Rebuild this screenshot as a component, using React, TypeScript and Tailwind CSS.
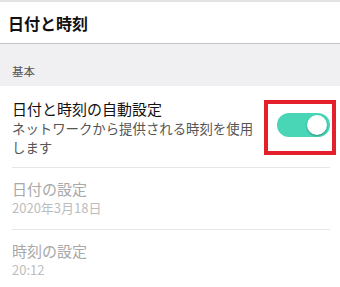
import React from "react";

function Toggle({ on }: { on: boolean }) {
  return (
    <div
      className={`relative h-[24px] w-[53px] rounded-full ${
        on ? "bg-[#48d6b6]" : "bg-[#cccccc]"
      }`}
    >
      <div
        className={`absolute top-[2px] h-[20px] w-[20px] rounded-full bg-white shadow-[0_1px_2px_rgba(0,0,0,0.35)] ${
          on ? "right-[3px]" : "left-[3px]"
        }`}
      />
    </div>
  );
}

export default function App() {
  return (
    <div className="h-[287px] w-[340px] overflow-hidden bg-white font-['Noto_Sans_CJK_JP','Noto_Sans',sans-serif]">
      <div className="flex h-[44px] items-center border-t-2 border-b border-t-[#e2e2e2] border-b-[#c4c4c4] pl-2 text-[16px] font-bold text-[#111]">
        日付と時刻
      </div>

      <div className="flex h-[42px] items-end bg-[#f0f0f2] pb-[6px] pl-3 text-[11.5px] text-[#555]">
        基本
      </div>

      <div className="ml-3 mr-[10px]">
        <div className="flex items-start justify-between border-b border-[#e6e6e6] pt-[13px] pb-[10px]">
          <div>
            <div className="text-[15px] leading-[20px] text-[#111]">
              日付と時刻の自動設定
            </div>
            <div className="w-[248px] text-[13.4px] leading-[19px] text-[#555]">
              ネットワークから提供される時刻を使用します
            </div>
          </div>
          <div className="-mr-[6px] mt-[1px] flex h-[55px] w-[72px] justify-end border-4 border-[#e3202b] pt-[9px] pr-[2px]">
            <Toggle on />
          </div>
        </div>

        <div className="border-b border-[#e6e6e6] pt-[11px] pb-[12px]">
          <div className="text-[15px] leading-[20px] text-[#a8a8a8]">
            日付の設定
          </div>
          <div className="text-[13px] leading-[18px] text-[#bdbdbd]">
            2020年3月18日
          </div>
        </div>

        <div className="pt-[11px]">
          <div className="text-[15px] leading-[20px] text-[#a8a8a8]">
            時刻の設定
          </div>
          <div className="text-[13px] leading-[18px] text-[#bdbdbd]">
            20:12
          </div>
        </div>
      </div>
    </div>
  );
}
